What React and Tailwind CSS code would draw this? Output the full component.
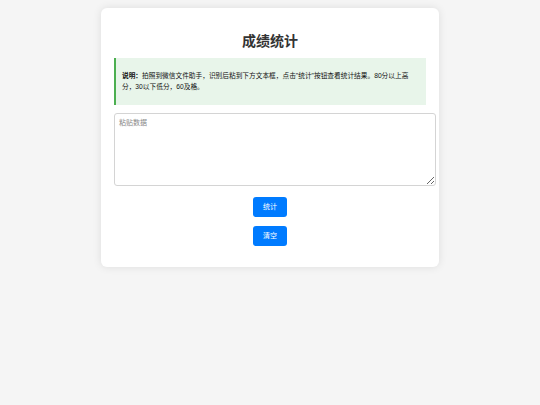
export default function App() {
  return (
    <div
      className="min-h-screen bg-[#f5f5f5] pt-[8px]"
      style={{ fontFamily: '"Liberation Sans", "Noto Sans CJK SC", sans-serif' }}
    >
      <div className="mx-auto w-[338px] bg-white rounded-[6px] shadow-[0_0_8px_rgba(0,0,0,0.1)] px-[13px] pt-[23px] pb-[21px]">
        <h2 className="text-center text-[14px] leading-[20px] font-bold text-[#333]">成绩统计</h2>

        <div className="mt-[7px] bg-[#e8f5ea] border-l-2 border-[#4caf50] px-[6px] py-[13px] text-[6.7px] leading-[10.5px] text-[#111]">
          <p>
            <b>说明：</b>拍照到微信文件助手，识别后粘到下方文本框，点击"统计"按钮查看统计结果。80分以上高分，30以下低分，60及格。
          </p>
        </div>

        <textarea
          placeholder="粘贴数据"
          className="mt-[8px] block w-[322px] h-[73px] border border-[#d4d4d4] rounded-[3px] px-[4px] py-[4px] text-[7px] leading-[10px] text-[#333] placeholder:text-[#888] outline-none"
        />

        <div className="mt-[11px] flex flex-col items-center gap-[9px]">
          <button className="w-[34px] h-[20px] bg-[#007bff] text-white text-[7px] rounded-[3px]">统计</button>
          <button className="w-[34px] h-[20px] bg-[#007bff] text-white text-[7px] rounded-[3px]">清空</button>
        </div>
      </div>
    </div>
  )
}
